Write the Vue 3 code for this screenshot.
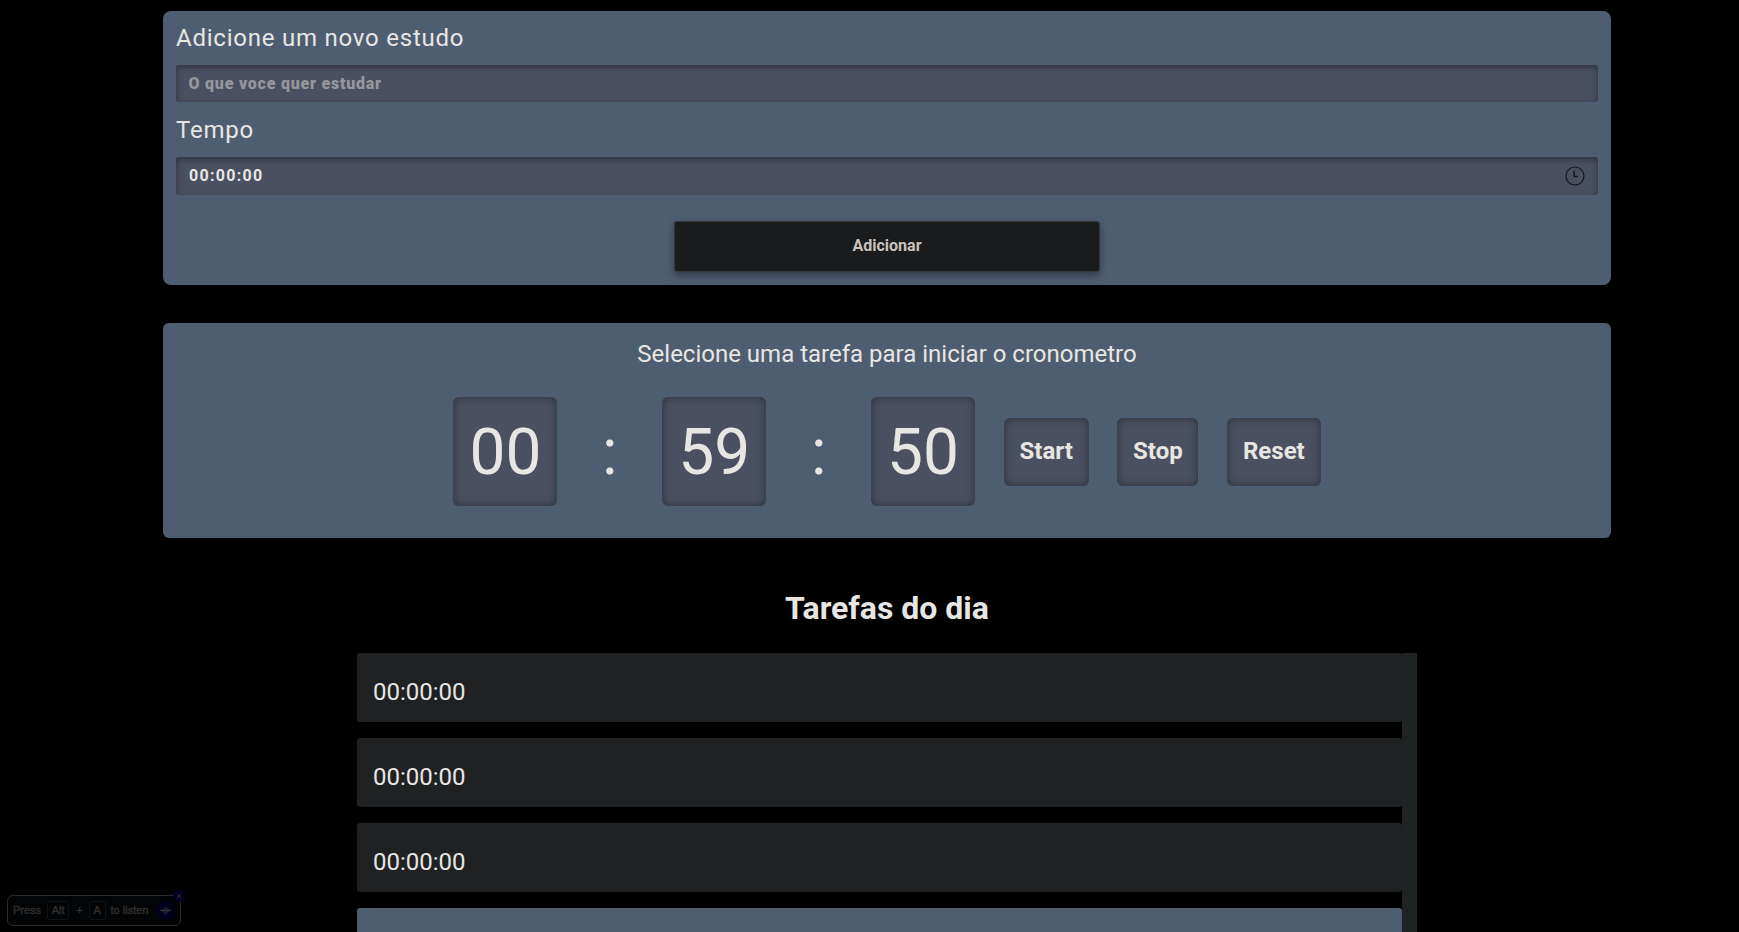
<script setup>
const tasks = ['00:00:00', '00:00:00', '00:00:00', '']
const controls = ['Start', 'Stop', 'Reset']
const digits = ['00', '59', '50']
</script>

<template>
  <main class="page">
    <form class="card form" @submit.prevent>
      <label class="label" for="study">Adicione um novo estudo</label>
      <input id="study" class="field" type="text" placeholder="O que voce quer estudar" />
      <label class="label second">Tempo</label>
      <div class="field time">
        <span>00:00:00</span>
        <svg class="clock" width="20" height="20" viewBox="0 0 20 20" fill="none" stroke="#14181a">
          <circle cx="10" cy="10" r="9" stroke-width="1.2" />
          <path d="M9.2 4.8v5.7h3.8" stroke-width="1.5" />
        </svg>
      </div>
      <button class="add">Adicionar</button>
    </form>

    <section class="card timer">
      <p class="prompt">Selecione uma tarefa para iniciar o cronometro</p>
      <div class="clock-row">
        <template v-for="(d, i) in digits" :key="i">
          <span v-if="i" class="colon">:</span>
          <span class="digits">{{ d }}</span>
        </template>
        <button v-for="c in controls" :key="c" class="control">{{ c }}</button>
      </div>
    </section>

    <aside class="tasks">
      <h2>Tarefas do dia</h2>
      <div class="scroller">
        <ul>
          <li v-for="(t, i) in tasks" :key="i" :class="{ selected: i === 3 }">{{ t }}</li>
        </ul>
        <div class="track"></div>
      </div>
    </aside>

    <div class="listen">
      <span>Press</span><kbd class="alt">Alt</kbd><span class="plus">+</span><kbd class="key-a">A</kbd><span class="to">to listen</span>
      <svg class="wave" width="19" height="19" viewBox="0 0 19 19">
        <circle cx="9.5" cy="9.5" r="9.5" fill="#00001d" />
        <path d="M4 9.5h11M6.5 8v3M8.3 7v5M10 5.5v8M11.8 7v4.5M13.2 8.3v2.4" stroke="#30303a" stroke-width="1" fill="none" />
      </svg>
      <svg class="close" width="12" height="12" viewBox="0 0 12 12">
        <circle cx="6" cy="6" r="6" fill="#00001d" />
        <path d="M3.8 3.8l4.4 4.4M8.2 3.8l-4.4 4.4" stroke="#34343e" stroke-width="0.9" />
      </svg>
    </div>
  </main>
</template>

<style>
body { background: #000; overflow: hidden; }
</style>

<style scoped>
* { box-sizing: border-box; margin: 0; padding: 0; }
.page {
  height: 932px;
  overflow: hidden;
  padding: 11px 128px 0 163px;
  display: flex;
  flex-direction: column;
  font-family: Roboto, sans-serif;
  color: #e8e6e3;
  background: #000;
}
.card { background: #4f5d70; border-radius: 8px; flex: none; }
.form {
  height: 274px;
  padding: 12px 13px 0;
  display: flex;
  flex-direction: column;
}
.label { font-size: 24px; line-height: 30px; letter-spacing: 0.77px; }
.second { margin-top: 13px; }
.field {
  margin-top: 12px;
  height: 37px;
  flex: none;
  width: 100%;
  border: 0;
  border-radius: 3px;
  padding: 0 13px 0 12.5px;
  background: #4b5060;
  box-shadow: inset 0 2px 6px rgba(0, 0, 0, 0.4);
  font: bold 16px Roboto, sans-serif;
  letter-spacing: 0.77px;
  color: #e8e6e3;
}
.field::placeholder { color: #96979c; opacity: 1; font-weight: 900; }
.time {
  height: 38px;
  display: flex;
  align-items: center;
  justify-content: space-between;
  padding: 0 13.5px 1px 13px;
  letter-spacing: 1.3px;
}
.add {
  align-self: center;
  margin-top: 26px;
  width: 426px;
  height: 51px;
  padding-bottom: 2px;
  border: 1px solid #34383b;
  border-radius: 3px;
  background: #1a1b1d;
  color: #c8c3bc;
  font: bold 16px Roboto, sans-serif;
  box-shadow: 0 3px 7px rgba(0, 0, 0, 0.4);
}
.timer {
  margin-top: 38px;
  height: 215px;
  border-radius: 6px;
  padding-top: 17px;
  text-align: center;
}
.prompt { font-size: 24px; line-height: 28px; }
.clock-row {
  margin-top: 29px;
  display: flex;
  justify-content: center;
  align-items: center;
  gap: 28.7px;
}
.digits, .colon {
  padding: 17px 16px 15px;
  height: 109px;
  font-size: 64px;
  line-height: 77px;
}
.digits, .control {
  background: #4b5060;
  border-radius: 6px;
  box-shadow: inset 0 0 8px rgba(0, 0, 0, 0.42);
}
.control {
  height: 68px;
  padding: 0 15.8px 1px;
  border: 0;
  font: bold 24px Roboto, sans-serif;
  color: #e8e6e3;
}
.tasks { margin: 50px 194px 0; text-align: center; }
h2 { font-size: 32px; line-height: 40px; }
.scroller { margin-top: 25px; height: 279px; display: flex; overflow: hidden; }
ul { flex: 1; list-style: none; display: flex; flex-direction: column; gap: 16px; text-align: left; }
li {
  height: 69px;
  flex: none;
  padding: 25px 16px 0;
  border-radius: 3px;
  background: #202123;
  font-size: 24px;
  line-height: 28px;
}
.selected { background: #4f5d70; }
.track { width: 15px; background: #202324; }
.listen {
  position: fixed;
  left: 7px;
  top: 895px;
  width: 174px;
  height: 31px;
  border: 1px solid #2c2c2c;
  border-radius: 6px;
  background: #030405;
  display: flex;
  align-items: center;
  padding: 0 0 1px 5px;
  font: 11px "Liberation Sans", sans-serif;
  -webkit-text-stroke: 0.4px #303030;
  color: #303030;
  white-space: nowrap;
}
.listen kbd {
  height: 19px;
  border: 1px solid #111214;
  border-radius: 3px;
  text-align: center;
  font: inherit;
  line-height: 17px;
}
.alt { width: 22px; margin-left: 6px; }
.plus { margin-left: 7px; }
.key-a { width: 17px; margin-left: 6px; }
.to { margin-left: 5px; }
.wave { position: absolute; left: 148px; top: 5px; }
.close { position: absolute; left: 165px; top: -6px; }
</style>
